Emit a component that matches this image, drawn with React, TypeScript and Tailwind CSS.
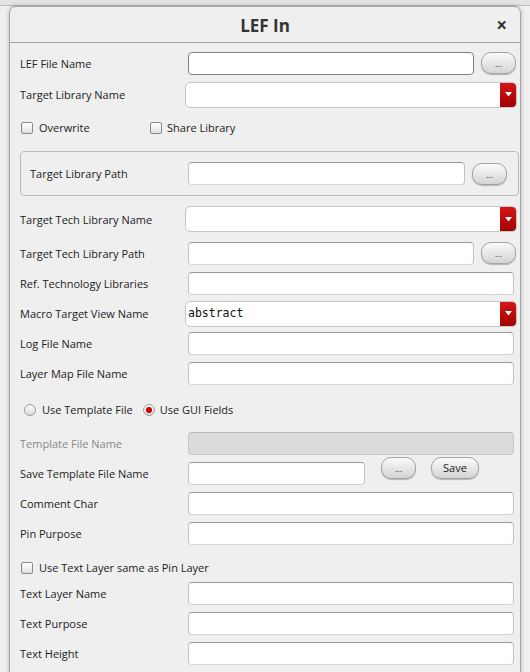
import React from "react";

const font = { fontFamily: '"Open Sans", "Noto Sans", sans-serif' };

function Input({ dark, disabled, w }: { dark?: boolean; disabled?: boolean; w?: string }) {
  const base = "h-[23px] rounded-[4px] border";
  const cls = disabled
    ? "bg-[#dcdcdc] border-[#c8c8c8] border-t-[#b8b8b8]"
    : dark
    ? "bg-white border-[#808080]"
    : "bg-white border-[#d4d4d4] border-t-[#9a9a9a] border-l-[#c2c2c2] border-r-[#c2c2c2]";
  return <div className={`${base} ${cls} ${w ?? "flex-1"}`} />;
}

function DotsButton({ className = "" }: { className?: string }) {
  return (
    <div
      className={`h-[22px] w-[35px] rounded-[10px] border border-[#a4a4a4] bg-linear-to-b from-[#fbfbfb] to-[#d4d4d4] shadow-[0_1px_1px_rgba(0,0,0,0.25)] flex items-center justify-center text-[9px] text-[#333] pt-[2px] ${className}`}
    >
      ...
    </div>
  );
}

function Combo({ value }: { value?: string }) {
  return (
    <div className="flex-1 h-[26px] rounded-[5px] border border-[#c6c6c6] bg-white flex overflow-hidden">
      <div
        className="flex-1 flex items-center pl-[2px] text-[11.5px] text-[#111]"
        style={{ fontFamily: '"DejaVu Sans Mono", monospace' }}
      >
        {value}
      </div>
      <div className="w-[16px] bg-linear-to-b from-[#d51616] to-[#a30202] flex items-center justify-center">
        <svg width="7" height="5" viewBox="0 0 7 5">
          <path d="M0 0 L7 0 L3.5 4.5 Z" fill="#fff" />
        </svg>
      </div>
    </div>
  );
}

function Checkbox() {
  return (
    <div className="w-[12px] h-[12px] shrink-0 rounded-[2px] border border-[#8a8a8a] bg-linear-to-b from-[#ffffff] to-[#e2e2e2]" />
  );
}

function Radio({ checked }: { checked?: boolean }) {
  return (
    <div className="w-[12px] h-[12px] shrink-0 rounded-full border border-[#9c9c9c] bg-linear-to-b from-[#ffffff] to-[#dadada] flex items-center justify-center">
      {checked && <div className="w-[6px] h-[6px] rounded-full bg-[#d40000]" />}
    </div>
  );
}

function Label({ text, gray }: { text: string; gray?: boolean }) {
  return <div className={`text-[11px] mt-[2px] ${gray ? "text-[#8a8a8a]" : "text-[#222]"}`}>{text}</div>;
}

function InputRow({ label, dark, disabled, gray, extra }: { label: string; dark?: boolean; disabled?: boolean; gray?: boolean; extra?: string }) {
  return (
    <div className={`flex items-center h-[30px] pl-[10px] pr-[6px] ${extra ?? ""}`}>
      <div className="w-[168px]">
        <Label text={label} gray={gray} />
      </div>
      <Input dark={dark} disabled={disabled} />
    </div>
  );
}

function ButtonRow({ label, dark, extra }: { label: string; dark?: boolean; extra?: string }) {
  return (
    <div className={`flex items-center h-[30px] pl-[10px] pr-[4px] ${extra ?? ""}`}>
      <div className="w-[168px]">
        <Label text={label} />
      </div>
      <Input dark={dark} />
      <DotsButton className="ml-[7px]" />
    </div>
  );
}

function ComboRow({ label, value, extra, h }: { label: string; value?: string; extra?: string; h?: string }) {
  return (
    <div className={`flex items-center ${h ?? "h-[30px]"} pl-[10px] pr-[3px] ${extra ?? ""}`}>
      <div className="w-[165px]">
        <Label text={label} />
      </div>
      <Combo value={value} />
    </div>
  );
}

export default function App() {
  return (
    <div className="w-[530px] h-[672px] bg-[#f0f0f0] overflow-hidden relative" style={font}>
      <div className="h-[6px] bg-[#e4e4e4] border-b border-[#bdbdbd]" />
      <div className="ml-[9px] w-[512px] h-[700px] border border-[#a6a6a6] rounded-t-[7px] bg-[#efefef] shadow-[0_0_4px_rgba(0,0,0,0.25)]">
        <div className="h-[36px] border-b border-[#a3a3a3] flex items-center relative">
          <div className="flex-1 text-center text-[17px] font-bold text-[#333] mt-[2px]">LEF In</div>
          <div className="absolute right-[13px] top-[6px] text-[19px] font-bold text-[#333] leading-[24px]">×</div>
        </div>

        <div className="flex flex-col">
          <ButtonRow label="LEF File Name" dark extra="mt-[5px]" />
          <ComboRow label="Target Library Name" h="h-[31px]" extra="mt-[1px]" />
          <div className="flex items-center h-[30px] pl-[11px] mt-[2px] pt-[2px]">
            <div className="w-[129px] flex items-center">
              <Checkbox />
              <span className="ml-[6px] mt-[1px] text-[11px] text-[#222]">Overwrite</span>
            </div>
            <Checkbox />
            <span className="ml-[5px] mt-[1px] text-[11px] text-[#222]">Share Library</span>
          </div>

          <div className="ml-[10px] mr-[1px] mt-[9px] h-[45px] rounded-[4px] border border-[#bcbcbc] flex items-center pl-[9px] pr-[11px]">
            <div className="w-[158px]">
              <Label text="Target Library Path" />
            </div>
            <Input />
            <DotsButton className="ml-[7px]" />
          </div>

          <ComboRow label="Target Tech Library Name" extra="mt-[8px]" />
          <ButtonRow label="Target Tech Library Path" extra="mt-[4px]" />
          <InputRow label="Ref. Technology Libraries" />
          <ComboRow label="Macro Target View Name" value="abstract" h="h-[29px]" extra="mt-[1px]" />
          <InputRow label="Log File Name" />
          <InputRow label="Layer Map File Name" />

          <div className="flex items-center h-[30px] pl-[14px] mt-[6px] pt-[2px]">
            <Radio />
            <span className="ml-[6px] mt-[1px] text-[11px] text-[#222]">Use Template File</span>
            <div className="ml-[10px]">
              <Radio checked />
            </div>
            <span className="ml-[5px] mt-[1px] text-[11px] text-[#222]">Use GUI Fields</span>
          </div>

          <InputRow label="Template File Name" disabled gray extra="mt-[4px]" />
          <div className="flex items-center h-[30px] pl-[10px]">
            <div className="w-[168px]">
              <Label text="Save Template File Name" />
            </div>
            <Input w="w-[177px]" />
            <div className="self-start mt-[-1px] flex items-center">
              <DotsButton className="ml-[16px]" />
              <div className="ml-[15px] h-[22px] w-[48px] rounded-[10px] border border-[#a4a4a4] bg-linear-to-b from-[#fbfbfb] to-[#d4d4d4] shadow-[0_1px_1px_rgba(0,0,0,0.25)] flex items-center justify-center text-[11px] text-[#222]">
                Save
              </div>
            </div>
          </div>
          <InputRow label="Comment Char" />
          <InputRow label="Pin Purpose" />

          <div className="flex items-center h-[23px] pl-[11px] mt-[7px] pt-[2px]">
            <Checkbox />
            <span className="ml-[6px] mt-[1px] text-[11px] text-[#222]">Use Text Layer same as Pin Layer</span>
          </div>
          <InputRow label="Text Layer Name" />
          <InputRow label="Text Purpose" />
          <InputRow label="Text Height" />
        </div>
      </div>
    </div>
  );
}
